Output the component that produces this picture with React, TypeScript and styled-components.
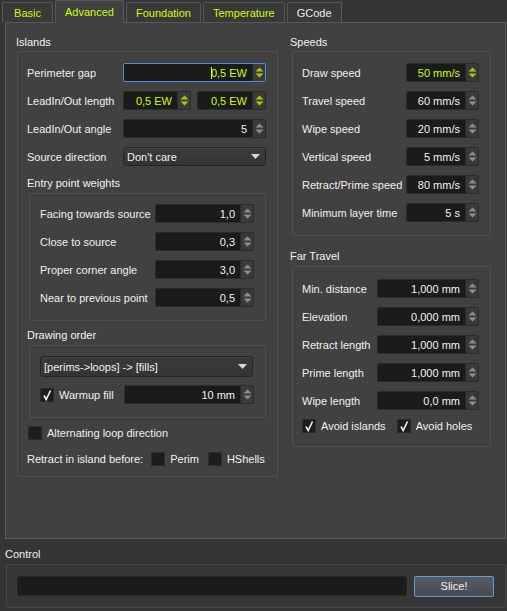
import React from 'react';
import styled, { createGlobalStyle } from 'styled-components';

const GlobalStyle = createGlobalStyle`
  html, body { margin: 0; padding: 0; background: #353535; }
  body {
    font-family: "Liberation Sans", Arial, sans-serif;
    font-size: 11px;
    color: #f0f0f0;
    overflow: hidden;
  }
  * { box-sizing: border-box; }
`;

const HL = '#ccff00';

const Window = styled.div`
  width: 507px;
  height: 611px;
  display: flex;
  flex-direction: column;
  background: #353535;
`;

const TabBar = styled.div`
  display: flex;
  align-items: flex-end;
  height: 22px;
  padding-left: 2px;
  gap: 2px;
`;

const Tab = styled.div<{ $active?: boolean; $hl?: boolean }>`
  position: relative;
  z-index: ${(p) => (p.$active ? 1 : 0)};
  height: ${(p) => (p.$active ? 23 : 20)}px;
  margin-bottom: ${(p) => (p.$active ? -1 : 0)}px;
  min-width: 51px;
  padding: 0 9px;
  display: flex;
  align-items: center;
  justify-content: center;
  background: ${(p) => (p.$active ? '#414141' : '#393939')};
  border: 1px solid #585858;
  border-bottom: none;
  border-radius: 2px 2px 0 0;
  color: ${(p) => (p.$hl ? HL : '#ececec')};
  white-space: nowrap;
`;

const Pane = styled.div`
  margin-left: 5px;
  width: 501px;
  height: 517px;
  background: #414141;
  border: 1px solid #595959;
  padding: 11px 0 0 10px;
  display: flex;
  gap: 12px;
  align-items: flex-start;
`;

const Column = styled.div<{ $w: number }>`
  width: ${(p) => p.$w}px;
  display: flex;
  flex-direction: column;
`;

const Title = styled.div<{ $mt?: number }>`
  height: 16px;
  line-height: 16px;
  margin-top: ${(p) => p.$mt ?? 0}px;
  color: #f2f2f2;
  white-space: nowrap;
`;

const Box = styled.div<{ $w: number; $ml: number; $mt?: number; $pt: number; $pb: number; $pl?: number; $pr?: number }>`
  width: ${(p) => p.$w}px;
  margin-left: ${(p) => p.$ml}px;
  margin-top: ${(p) => p.$mt ?? 1}px;
  border: 1px solid #505050;
  border-radius: 2px;
  padding: ${(p) => `${p.$pt}px ${p.$pr ?? 11}px ${p.$pb}px ${p.$pl ?? 9}px`};
  display: flex;
  flex-direction: column;
`;

const Section = styled.div<{ $mt: number }>`
  margin-top: ${(p) => p.$mt}px;
  display: flex;
  flex-direction: column;
`;

const Row = styled.div<{ $mt?: number; $h?: number }>`
  margin-top: ${(p) => p.$mt ?? 9}px;
  height: ${(p) => p.$h ?? 19}px;
  display: flex;
  align-items: center;
  justify-content: space-between;
`;

const Label = styled.span`
  color: #f0f0f0;
  white-space: nowrap;
`;

const Pair = styled.div`
  display: flex;
  gap: 6px;
`;

const SpinWrap = styled.div<{ $w: number; $focus?: boolean }>`
  width: ${(p) => p.$w}px;
  height: 19px;
  display: flex;
  background: #1b1b1b;
  border: 1px solid ${(p) => (p.$focus ? '#4c8fd8' : '#2b2b2b')};
  border-radius: 2px;
  overflow: hidden;
`;

const SpinValue = styled.div<{ $hl?: boolean }>`
  flex: 1;
  display: flex;
  align-items: center;
  justify-content: flex-end;
  padding-right: 5px;
  color: ${(p) => (p.$hl ? HL : '#f2f2f2')};
  white-space: nowrap;
`;

const Caret = styled.span`
  display: inline-block;
  width: 1px;
  height: 12px;
  background: ${HL};
  margin-right: -1px;
`;

const SpinButtons = styled.div`
  width: 13px;
  background: #3a3a3a;
  border-left: 1px solid #2a2a2a;
  display: flex;
  align-items: center;
  justify-content: center;
`;

const SpinArrows = ({ hl }: { hl?: boolean }) => (
  <svg width="11" height="15" viewBox="0 0 11 15">
    <polygon points="1.5,6.5 5.5,2.5 9.5,6.5" fill={hl ? '#b3c300' : '#8e8e8e'} />
    <polygon points="1.5,8.5 5.5,12.5 9.5,8.5" fill={hl ? '#b3c300' : '#8e8e8e'} />
  </svg>
);

const SpinBox = ({ w, value, hl, focus }: { w: number; value: string; hl?: boolean; focus?: boolean }) => (
  <SpinWrap $w={w} $focus={focus}>
    <SpinValue $hl={hl}>
      {focus && <Caret />}
      {value}
    </SpinValue>
    <SpinButtons>
      <SpinArrows hl={hl} />
    </SpinButtons>
  </SpinWrap>
);

const ComboWrap = styled.div<{ $w: number; $h: number }>`
  width: ${(p) => p.$w}px;
  height: ${(p) => p.$h}px;
  display: flex;
  align-items: center;
  justify-content: space-between;
  padding: 0 5px 0 3px;
  background: linear-gradient(#3b3b3b, #343434);
  border: 1px solid #252525;
  border-radius: 3px;
  box-shadow: inset 0 1px 0 #444;
  color: #f2f2f2;
  white-space: nowrap;
`;

const Combo = ({ w, h, text }: { w: number; h: number; text: string }) => (
  <ComboWrap $w={w} $h={h}>
    <span>{text}</span>
    <svg width="9" height="5" viewBox="0 0 9 5">
      <polygon points="0,0 9,0 4.5,5" fill="#d6d6d6" />
    </svg>
  </ComboWrap>
);

const CheckRow = styled.div<{ $mt: number; $ml?: number }>`
  margin-top: ${(p) => p.$mt}px;
  margin-left: ${(p) => p.$ml ?? 0}px;
  height: 14px;
  display: flex;
  align-items: center;
`;

const CheckItem = styled.div<{ $ml?: number }>`
  display: flex;
  align-items: center;
  gap: 5px;
  margin-left: ${(p) => p.$ml ?? 0}px;
  white-space: nowrap;
`;

const CheckSquare = styled.div`
  width: 14px;
  height: 14px;
  background: #1d1d1d;
  border: 1px solid #2c2c2c;
  display: flex;
  align-items: center;
  justify-content: center;
`;

const Check = ({ checked }: { checked?: boolean }) => (
  <CheckSquare>
    {checked && (
      <svg width="12" height="12" viewBox="0 0 12 12">
        <polyline points="3,6.5 5.2,10.5 9.5,1.5" fill="none" stroke="#f0f0f0" strokeWidth="1.6" />
      </svg>
    )}
  </CheckSquare>
);

const ControlTitle = styled.div`
  margin: 7px 0 0 5px;
  height: 16px;
  line-height: 16px;
`;

const ControlBox = styled.div`
  margin: 2px 0 0 6px;
  width: 500px;
  height: 44px;
  border: 1px solid #474747;
  border-radius: 2px;
  background: #363636;
  padding: 0 11px 0 10px;
  display: flex;
  align-items: center;
  gap: 7px;
`;

const Progress = styled.div`
  flex: 1;
  height: 20px;
  background: #1b1b1b;
  border: 1px solid #262626;
  border-radius: 2px;
`;

const SliceButton = styled.div`
  width: 80px;
  height: 21px;
  display: flex;
  align-items: center;
  justify-content: center;
  background: linear-gradient(#565b63, #474b52);
  border: 1px solid #5b9de1;
  border-radius: 2px;
  color: #f2f2f2;
`;

const tabs = [
  { name: 'Basic', hl: true },
  { name: 'Advanced', hl: true, active: true },
  { name: 'Foundation', hl: true },
  { name: 'Temperature', hl: true },
  { name: 'GCode', hl: false },
];

const entryWeights = [
  ['Facing towards source', '1,0'],
  ['Close to source', '0,3'],
  ['Proper corner angle', '3,0'],
  ['Near to previous point', '0,5'],
];

const speeds: [string, string, boolean?][] = [
  ['Draw speed', '50 mm/s', true],
  ['Travel speed', '60 mm/s'],
  ['Wipe speed', '20 mm/s'],
  ['Vertical speed', '5 mm/s'],
  ['Retract/Prime speed', '80 mm/s'],
  ['Minimum layer time', '5 s'],
];

const farTravel = [
  ['Min. distance', '1,000 mm'],
  ['Elevation', '0,000 mm'],
  ['Retract length', '1,000 mm'],
  ['Prime length', '1,000 mm'],
  ['Wipe length', '0,0 mm'],
];

export default function App() {
  return (
    <Window>
      <GlobalStyle />
      <TabBar>
        {tabs.map((t) => (
          <Tab key={t.name} $active={t.active} $hl={t.hl}>
            {t.name}
          </Tab>
        ))}
      </TabBar>
      <Pane>
        <Column $w={262}>
          <Title>Islands</Title>
          <Box $w={261} $ml={1} $pt={11} $pb={10}>
            <Row $mt={0}>
              <Label>Perimeter gap</Label>
              <SpinBox w={143} value="0,5 EW" hl focus />
            </Row>
            <Row>
              <Label>LeadIn/Out length</Label>
              <Pair>
                <SpinBox w={68} value="0,5 EW" hl />
                <SpinBox w={69} value="0,5 EW" hl />
              </Pair>
            </Row>
            <Row>
              <Label>LeadIn/Out angle</Label>
              <SpinBox w={143} value="5" />
            </Row>
            <Row>
              <Label>Source direction</Label>
              <Combo w={143} h={19} text="Don't care" />
            </Row>
            <Section $mt={9}>
              <Title>Entry point weights</Title>
              <Box $w={237} $ml={2} $mt={2} $pt={10} $pb={13} $pl={10}>
                {entryWeights.map(([l, v], i) => (
                  <Row key={l} $mt={i === 0 ? 0 : 9}>
                    <Label>{l}</Label>
                    <SpinBox w={99} value={v} />
                  </Row>
                ))}
              </Box>
            </Section>
            <Section $mt={6}>
              <Title>Drawing order</Title>
              <Box $w={237} $ml={2} $mt={2} $pt={10} $pb={13} $pl={10}>
                <Row $mt={0} $h={21}>
                  <Combo w={213} h={21} text="[perims->loops] -> [fills]" />
                </Row>
                <Row $mt={8}>
                  <CheckItem>
                    <Check checked />
                    <Label>Warmup fill</Label>
                  </CheckItem>
                  <SpinBox w={130} value="10 mm" />
                </Row>
              </Box>
            </Section>
            <CheckRow $mt={8} $ml={1}>
              <CheckItem>
                <Check />
                <Label>Alternating loop direction</Label>
              </CheckItem>
            </CheckRow>
            <CheckRow $mt={12}>
              <Label>Retract in island before:</Label>
              <CheckItem $ml={8}>
                <Check />
                <Label>Perim</Label>
              </CheckItem>
              <CheckItem $ml={9}>
                <Check />
                <Label>HShells</Label>
              </CheckItem>
            </CheckRow>
          </Box>
        </Column>
        <Column $w={201}>
          <Title>Speeds</Title>
          <Box $w={199} $ml={2} $pt={11} $pb={13}>
            {speeds.map(([l, v, hl], i) => (
              <Row key={l} $mt={i === 0 ? 0 : 9}>
                <Label>{l}</Label>
                <SpinBox w={73} value={v} hl={hl} />
              </Row>
            ))}
          </Box>
          <Title $mt={12}>Far Travel</Title>
          <Box $w={199} $ml={2} $mt={2} $pt={12} $pb={13}>
            {farTravel.map(([l, v], i) => (
              <Row key={l} $mt={i === 0 ? 0 : 9}>
                <Label>{l}</Label>
                <SpinBox w={102} value={v} />
              </Row>
            ))}
            <CheckRow $mt={9}>
              <CheckItem>
                <Check checked />
                <Label>Avoid islands</Label>
              </CheckItem>
              <CheckItem $ml={11}>
                <Check checked />
                <Label>Avoid holes</Label>
              </CheckItem>
            </CheckRow>
          </Box>
        </Column>
      </Pane>
      <ControlTitle>Control</ControlTitle>
      <ControlBox>
        <Progress />
        <SliceButton>Slice!</SliceButton>
      </ControlBox>
    </Window>
  );
}
